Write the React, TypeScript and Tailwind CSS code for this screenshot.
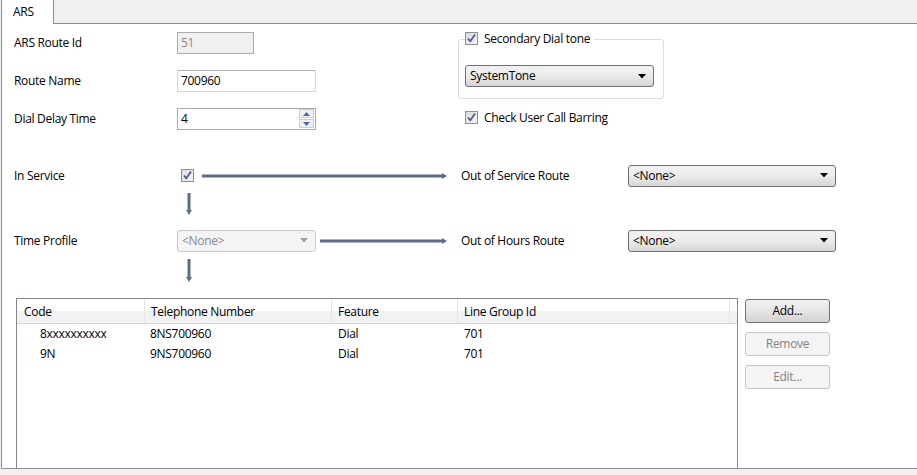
import React from 'react';

function Check({ className = '' }: { className?: string }) {
  return (
    <span className={`inline-flex w-[13px] h-[13px] border border-[#8e8f8f] bg-gradient-to-br from-[#dcdcdc] to-[#f5f5f5] items-center justify-center shrink-0 ${className}`}>
      <svg width="11" height="11" viewBox="0 0 11 11">
        <path d="M2 5.5 L4.3 8.3 L9 1.5" fill="none" stroke="#4a5d93" strokeWidth="1.8" />
      </svg>
    </span>
  );
}

function Combo({ value, width, disabled = false }: { value: string; width: string; disabled?: boolean }) {
  return (
    <div
      className={`${width} h-[22px] rounded-[3px] border flex items-center justify-between pl-[4px] pr-[7px] ${
        disabled
          ? 'border-[#c5c9cc] bg-[#f4f4f4] text-[#8a8a8a]'
          : 'border-[#707070] bg-gradient-to-b from-[#f2f2f2] via-[#ebebeb] to-[#d6d6d6] text-black'
      }`}
    >
      <span>{value}</span>
      <svg width="8" height="5" viewBox="0 0 8 5">
        <path d="M0 0 H8 L4 4.5 Z" fill={disabled ? '#a0a0a0' : '#000'} />
      </svg>
    </div>
  );
}

function HArrow({ width }: { width: number }) {
  return (
    <svg width={width} height="8" viewBox={`0 0 ${width} 8`} className="shrink-0">
      <rect x="0" y="2.5" width={width - 4} height="3" fill="#5f6d84" />
      <path d={`M${width - 5} 1 L${width} 4 L${width - 5} 7 Z`} fill="#5f6d84" />
    </svg>
  );
}

function VArrow({ height }: { height: number }) {
  return (
    <svg width="8" height={height} viewBox={`0 0 8 ${height}`} className="block">
      <rect x="2.5" y="0" width="3" height={height - 4} fill="#5f6d84" />
      <path d={`M1 ${height - 5} L4 ${height} L7 ${height - 5} Z`} fill="#5f6d84" />
    </svg>
  );
}

function Button({ label, disabled = false, className = '' }: { label: string; disabled?: boolean; className?: string }) {
  return (
    <div
      className={`w-[85px] h-[24px] rounded-[3px] border flex items-center justify-center ${
        disabled
          ? 'border-[#c3c6c9] bg-[#f4f4f4] text-[#838383]'
          : 'border-[#707070] bg-gradient-to-b from-[#f2f2f2] via-[#e5e5e5] to-[#d3d3d3] text-black'
      } ${className}`}
    >
      {label}
    </div>
  );
}

const rows = [
  { code: '8xxxxxxxxxx', tel: '8NS700960', feature: 'Dial', group: '701' },
  { code: '9N', tel: '9NS700960', feature: 'Dial', group: '701' },
];

export default function App() {
  return (
    <div className="w-[917px] h-[475px] bg-[#f0f0f0] overflow-hidden text-[12px] tracking-[-0.3px] text-black font-['Open_Sans',sans-serif] leading-none">
      {/* tab strip */}
      <div className="flex h-[24px]">
        <div className="w-[53px] bg-white border-l border-r border-[#898c95] ml-[1px] pl-[11px] flex items-center">ARS</div>
        <div className="flex-1 border-b border-[#898c95]" />
      </div>

      {/* panel */}
      <div className="ml-[1px] h-[445px] bg-white border-l border-b border-[#898c95] pl-[12px] pt-[7px]">
        <div className="flex">
          {/* left fields */}
          <div className="w-[444px] flex flex-col gap-[16px]">
            <div className="flex items-center h-[22px] pt-[1px]">
              <span className="w-[163px]">ARS Route Id</span>
              <div className="w-[77px] h-[22px] border border-[#adadad] bg-[#f0f0f0] text-[#8a8a8a] flex items-center pl-[3px]">51</div>
            </div>
            <div className="flex items-center h-[22px] pt-[1px]">
              <span className="w-[163px]">Route Name</span>
              <div className="w-[139px] h-[22px] border border-[#d9d9d9] border-t-[#b5b5b5] bg-white flex items-center pl-[3px]">700960</div>
            </div>
            <div className="flex items-center h-[22px] pt-[1px]">
              <span className="w-[163px]">Dial Delay Time</span>
              <div className="w-[139px] h-[22px] border border-[#a8a8a8] bg-white flex items-center justify-between pl-[3px] pr-[1px]">
                <span>4</span>
                <div className="flex flex-col gap-[1px]">
                  <div className="w-[15px] h-[9px] border border-[#c9ccd0] bg-[#eef0f4] flex items-center justify-center">
                    <svg width="7" height="4" viewBox="0 0 7 4"><path d="M0 4 L3.5 0 L7 4 Z" fill="#4f6aa3" /></svg>
                  </div>
                  <div className="w-[15px] h-[9px] border border-[#c9ccd0] bg-[#eef0f4] flex items-center justify-center">
                    <svg width="7" height="4" viewBox="0 0 7 4"><path d="M0 0 H7 L3.5 4 Z" fill="#4f6aa3" /></svg>
                  </div>
                </div>
              </div>
            </div>
          </div>

          {/* right group */}
          <div className="pt-[8px]">
            <div className="relative w-[206px] h-[60px] border border-[#d5dfe5] rounded-[3px] pt-[25px] pl-[6px]">
              <div className="absolute left-[6px] top-[-8px] bg-white pr-[4px] flex items-center gap-[6px]">
                <Check />
                <span>Secondary Dial tone</span>
              </div>
              <Combo value="SystemTone" width="w-[189px]" />
            </div>
            <div className="flex items-center gap-[6px] ml-[7px] mt-[12px]">
              <Check />
              <span>Check User Call Barring</span>
            </div>
          </div>
        </div>

        {/* routing rows */}
        <div className="mt-[35px] flex items-center h-[22px] pt-[1px]">
          <span className="w-[167px]">In Service</span>
          <Check />
          <div className="ml-[8px]"><HArrow width={245} /></div>
          <span className="ml-[14px] w-[167px]">Out of Service Route</span>
          <Combo value="<None>" width="w-[208px]" />
        </div>
        <div className="ml-[171px] pt-[7px] h-[43px]"><VArrow height={22} /></div>
        <div className="flex items-center h-[22px] pt-[1px]">
          <span className="w-[163px]">Time Profile</span>
          <Combo value="<None>" width="w-[139px]" disabled />
          <div className="ml-[4px]"><HArrow width={127} /></div>
          <span className="ml-[14px] w-[167px]">Out of Hours Route</span>
          <Combo value="<None>" width="w-[208px]" />
        </div>
        <div className="ml-[171px] pt-[8px] h-[47px]"><VArrow height={23} /></div>

        {/* table + buttons */}
        <div className="flex ml-[2px]">
          <div className="w-[722px] h-[170px] border-l border-t border-r border-[#828790] flex flex-col">
            <div className="flex h-[25px] border-b border-[#d5d5d5] bg-gradient-to-b from-white from-50% to-[#f1f2f4] to-50%">
              <div className="w-[128px] pl-[7px] border-r border-[#e3e5e8] flex items-center pt-[2px]">Code</div>
              <div className="w-[187px] pl-[6px] border-r border-[#e3e5e8] flex items-center pt-[2px]">Telephone Number</div>
              <div className="w-[126px] pl-[6px] border-r border-[#e3e5e8] flex items-center pt-[2px]">Feature</div>
              <div className="w-[272px] pl-[6px] border-r border-[#e3e5e8] flex items-center pt-[2px]">Line Group Id</div>
            </div>
            <div>
              {rows.map((r) => (
                <div key={r.code} className="flex h-[20px] items-center">
                  <div className="w-[128px] pl-[23px]">{r.code}</div>
                  <div className="w-[187px] pl-[5px]">{r.tel}</div>
                  <div className="w-[126px] pl-[6px]">{r.feature}</div>
                  <div className="pl-[6px]">{r.group}</div>
                </div>
              ))}
            </div>
          </div>
          <div className="ml-[7px] flex flex-col gap-[9px] pt-[1px]">
            <Button label="Add..." />
            <Button label="Remove" disabled />
            <Button label="Edit..." disabled />
          </div>
        </div>
      </div>
    </div>
  );
}
